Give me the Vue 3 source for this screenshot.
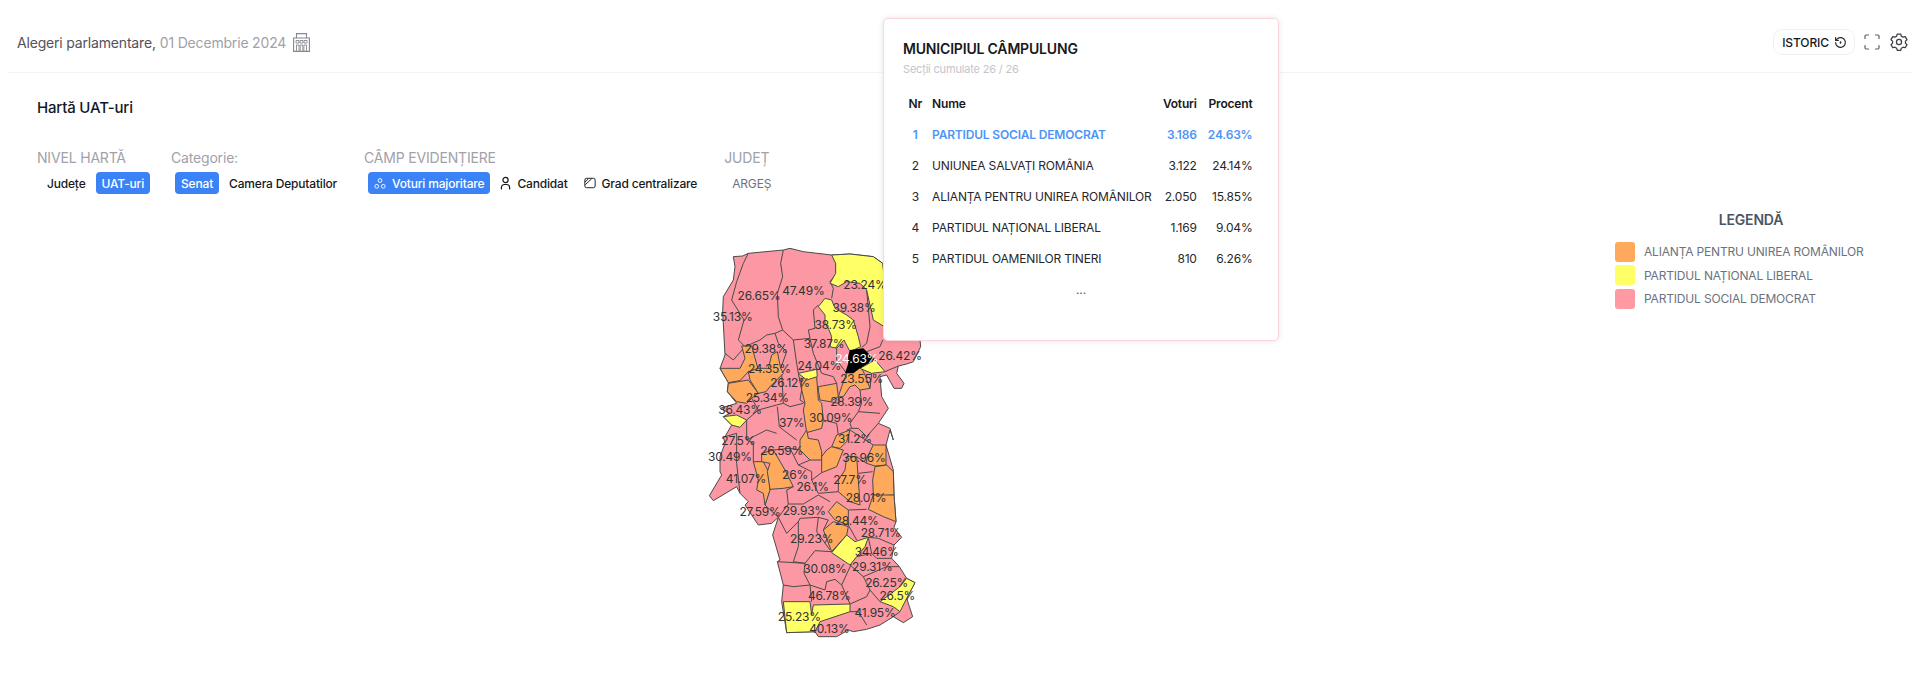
<script setup>
const rows = [
  { nr: 1, name: 'PARTIDUL SOCIAL DEMOCRAT', votes: '3.186', pct: '24.63%', lead: true },
  { nr: 2, name: 'UNIUNEA SALVAȚI ROMÂNIA', votes: '3.122', pct: '24.14%' },
  { nr: 3, name: 'ALIANȚA PENTRU UNIREA ROMÂNILOR', votes: '2.050', pct: '15.85%' },
  { nr: 4, name: 'PARTIDUL NAȚIONAL LIBERAL', votes: '1.169', pct: '9.04%' },
  { nr: 5, name: 'PARTIDUL OAMENILOR TINERI', votes: '810', pct: '6.26%' }
]
const legend = [
  { name: 'ALIANȚA PENTRU UNIREA ROMÂNILOR', color: '#ffa95c' },
  { name: 'PARTIDUL NAȚIONAL LIBERAL', color: '#ffff66' },
  { name: 'PARTIDUL SOCIAL DEMOCRAT', color: '#ff9aa2' }
]
const L = 570
const outline = '130,50 158,48 175,40 280,30 300,25 340,35 425,45 480,42 550,50 578,70 640,200 690,300 692,320 670,365 650,372 625,378 620,400 642,430 635,445 612,445 590,405 570,410 575,470 595,505 565,550 600,565 610,600 600,' + (L) + ' 588,' + (L + 45) + ' 610,' + (L + 120) + ' 612,' + (L + 195) + ' 618,' + (L + 275) + ' 612,' + (L + 292) + ' 635,' + (L + 322) + ' 612,' + (L + 345) + ' 605,' + (L + 385) + ' 628,' + (L + 410) + ' 650,' + (L + 445) + ' 675,' + (L + 458) + ' 650,' + (L + 505) + ' 668,' + (L + 560) + ' 640,' + (L + 578) + ' 610,' + (L + 560) + ' 570,' + (L + 585) + ' 530,' + (L + 598) + ' 490,' + (L + 605) + ' 475,' + (L + 600) + ' 440,' + (L + 620) + ' 385,' + (L + 620) + ' 375,' + (L + 605) + ' 290,' + (L + 608) + ' 275,' + (L + 515) + ' 280,' + (L + 465) + ' 262,' + (L + 395) + ' 270,' + (L + 390) + ' 248,' + (L + 315) + ' 265,' + (L + 262) + ' 245,' + (L + 280) + ' 205,' + (L + 285) + ' 165,' + (L + 225) + ' 175,' + (L + 215) + ' 150,' + (L + 190) + ' 140,' + (L + 170) + ' 70,' + (L + 212) + ' 58,' + (L + 197) + ' 95,' + (L + 135) + ' 90,' + (L + 125) + ' 90,' + (L + 80) + ' 105,' + (L + 40) + ' 100,' + (L + 20) + ' 105,590 125,555 100,530 120,520 90,505 140,490 112,455 115,428 90,385 105,345 98,215 100,170 130,120 135,80'
const shift = (pts) => pts.map(([x, y]) => x + ',' + (y + L)).join(' ')
const upperOrange = [
  '155,318 185,318 205,390 175,395 150,422 115,428 90,385 150,385 165,355',
  '115,430 175,420 205,460 185,475 170,490 140,485 112,455',
  '175,395 205,385 235,385 245,345 262,335 272,385 280,400 240,440 228,455 205,460 180,420',
  '335,415 380,412 385,480 395,490 400,540 395,565 350,578 340,510 345,490 335,450',
  '385,440 440,430 445,470 420,485 390,480 385,450',
  '470,400 485,380 515,385 525,405 540,445 510,450 495,435 480,440 460,470 445,470 455,440'
]
const lowerOrange = [
  [[350, 0], [355, 25], [385, 30], [395, 65], [395, 90], [360, 90], [330, 60], [330, 30]],
  [[440, 15], [480, 0], [470, 35], [450, 55], [425, 50]],
  [[425, 50], [460, 60], [440, 110], [395, 128], [395, 80], [410, 60]],
  [[470, 80], [500, 80], [505, 150], [510, 225], [480, 215], [445, 185], [445, 150], [465, 120]],
  [[550, 45], [588, 45], [588, 105], [555, 108], [530, 100], [530, 85]],
  [[555, 110], [590, 105], [610, 125], [612, 195], [580, 197], [550, 195], [548, 150]],
  [[550, 195], [612, 195], [618, 275], [580, 260], [535, 238]],
  [[190, 95], [220, 95], [235, 125], [240, 180], [225, 225], [220, 190], [200, 180], [205, 150]],
  [[215, 70], [250, 60], [285, 120], [310, 170], [280, 175], [240, 178], [232, 125], [240, 100], [215, 95]],
  [[440, 215], [475, 240], [475, 285], [435, 270], [415, 245]],
  [[430, 275], [475, 290], [470, 315], [425, 365], [400, 300]]
].map(shift)
const yellow = [
  '425,45 480,42 550,50 578,70 600,270 550,240 530,150 510,130 470,125 445,140 420,130 437,100 437,70',
  '405,175 385,200 405,225 405,250 415,265 425,290 420,320 440,325 462,300 480,335 512,320 505,290 490,240 470,225 435,205 425,180',
  '510,385 555,360 585,395 545,400',
  '325,400 380,388 382,410 350,420',
  '100,530 140,525 170,540 150,562 125,555',
  shift([[470, 315], [495, 335], [535, 322], [525, 350], [500, 380], [480, 405], [425, 368]]),
  shift([[650, 445], [675, 458], [650, 505], [630, 545], [610, 530], [570, 515], [630, 470]]),
  shift([[280, 515], [360, 515], [365, 555], [370, 525], [480, 522], [480, 545], [390, 575], [375, 605], [290, 608]])
]
const borders = [
  '175,40 160,70 140,125 125,180 162,240 145,300 165,320 130,360 105,340',
  '165,320 210,300 230,285 255,280 278,270 310,300 360,295 355,270 375,265 370,210 385,195',
  '280,30 272,70 278,110 262,160 265,230 278,270',
  '437,70 440,100 420,125 430,145 425,175',
  '255,280 265,310 290,335 272,385',
  '310,300 320,370 325,400 335,450 330,480 345,490',
  '360,295 370,340 395,400 430,410 440,430',
  '530,150 540,260 530,310 515,322',
  '578,300 570,320 530,335',
  '625,378 585,395',
  '545,400 540,445',
  '440,325 440,360 470,400',
  '275,400 280,490 300,500 340,490',
  '185,475 205,510 260,495 280,490',
  '205,510 170,540 170,600 230,' + (L + 0) + ' 260,' + (L + 10),
  '262,500 268,560 280,' + L + ' 320,' + (L + 30),
  '350,578 360,' + L,
  '400,540 440,550 445,' + (L + 15),
  '510,450 515,490 505,515 480,550 485,565 ',
  '505,515 570,520',
  '565,550 530,590 505,565 485,565 470,' + L,
  '445,470 445,490 420,485',
  '105,590 140,' + (L + 10) + ' 140,' + (L + 100) + ' 150,' + (L + 190),
  '170,600 190,' + (L + 40) + ' 190,' + (L + 95),
  shift([[250, 60], [300, 55], [330, 60]]),
  shift([[300, 55], [325, 105], [360, 90]]),
  shift([[325, 105], [365, 125], [365, 150], [395, 128]]),
  shift([[310, 170], [290, 180], [295, 222], [340, 222], [385, 195], [420, 215]]),
  shift([[365, 150], [385, 190], [445, 185]]),
  shift([[240, 178], [225, 225], [265, 262]]),
  shift([[295, 222], [265, 262], [290, 310], [325, 275], [330, 265], [385, 262], [415, 270], [400, 300]]),
  shift([[325, 275], [325, 350], [310, 395]]),
  shift([[385, 262], [380, 305], [420, 360]]),
  shift([[310, 395], [345, 400], [375, 362], [425, 365]]),
  shift([[262, 395], [345, 400], [342, 430], [360, 465], [310, 470], [280, 465]]),
  shift([[360, 465], [365, 515]]),
  shift([[360, 465], [405, 480], [410, 455], [435, 448], [455, 465], [485, 400]]),
  shift([[455, 465], [480, 522], [530, 500], [540, 480], [520, 440], [480, 405]]),
  shift([[540, 480], [570, 515]]),
  shift([[480, 545], [505, 545], [530, 585]]),
  shift([[475, 240], [530, 238]]),
  shift([[475, 285], [500, 330]]),
  shift([[535, 322], [545, 370], [500, 380]]),
  shift([[612, 345], [565, 325], [535, 322]]),
  shift([[545, 370], [560, 385], [605, 385]]),
  shift([[520, 440], [590, 410], [628, 410]]),
  shift([[500, 80], [530, 100]]),
  shift([[505, 130], [548, 125]]),
  shift([[480, 0], [550, 45]]),
  shift([[630, 545], [610, 560]])
]
const labels = [
  ['26.65%', 207, 165], ['47.49%', 340, 152], ['35.13%', 128, 230], ['23.24%', 525, 133],
  ['39.38%', 492, 202], ['38.73%', 437, 252], ['37.87%', 402, 310], ['29.38%', 228, 325],
  ['24.35%', 238, 385], ['24.04%', 388, 375], ['26.42%', 630, 345], ['23.55%', 515, 415],
  ['26.12%', 300, 428], ['25.34%', 232, 472], ['28.39%', 485, 484], ['36.43%', 150, 507],
  ['30.09%', 422, 533], ['37%', 305, 547],
  ['31.2%', 495, L + 25], ['27.5%', 145, L + 30], ['26.59%', 275, L + 60], ['30.49%', 120, L + 80],
  ['36.96%', 522, L + 82], ['26%', 315, L + 132], ['41.07%', 168, L + 145], ['27.7%', 480, L + 148],
  ['26.1%', 368, L + 170], ['28.01%', 528, L + 202], ['27.59%', 210, L + 243], ['29.93%', 343, L + 242],
  ['28.44%', 500, L + 270], ['28.71%', 572, L + 308], ['29.23%', 365, L + 325], ['34.46%', 560, L + 365],
  ['29.31%', 547, L + 410], ['30.08%', 405, L + 416], ['26.25%', 590, L + 457], ['26.5%', 622, L + 495],
  ['46.78%', 418, L + 495], ['41.95%', 555, L + 547], ['25.23%', 328, L + 558], ['40.13%', 418, L + 595]
]
</script>

<template>
  <div class="page">
    <header class="bar">
      <div class="crumb">
        <span>Alegeri parlamentare,</span>
        <span class="date">01 Decembrie 2024</span>
        <svg class="bldg" width="17" height="19" viewBox="0 0 17 19" fill="none" stroke="#85888f" stroke-width="1.1">
          <path d="M3.500 5V.6h10V5" />
          <path d="M.6 18.400V5h15.800v13.400zM0 18.400h17" />
          <path d="M3 7.500h3v2.500H3zM7 7.500h3v2.500H7zM11 7.500h3v2.500h-3z" stroke-width=".9" />
          <path d="M3.500 18v-6h2.600v6M7.200 18v-6h2.600v6M10.900 18v-6h2.600v6" stroke-width=".9" />
        </svg>
      </div>
      <div class="tools">
        <button class="hist">
          ISTORIC
          <svg width="13" height="13" viewBox="0 0 24 24" fill="none" stroke="#27272a" stroke-width="2.200" stroke-linecap="round" stroke-linejoin="round">
            <path d="M3 12a9 9 0 1 0 3-6.700L3 8" /><path d="M3 3v5h5" /><path d="M12 11v2" stroke-width="3" />
          </svg>
        </button>
        <svg class="ico" width="18" height="18" viewBox="0 0 18 18" fill="none" stroke="#5c5c66" stroke-width="1.200" stroke-linecap="round">
          <path d="M2 5.500V3.200Q2 2 3.200 2H5.500M12.500 2h2.300Q16 2 16 3.200V5.500M16 12.500v2.300q0 1.200-1.200 1.200H12.500M5.500 16H3.200Q2 16 2 14.800V12.500" />
        </svg>
        <svg class="ico" width="18" height="18" viewBox="0 0 24 24" fill="none" stroke="#3f3f46" stroke-width="1.700" stroke-linejoin="round">
          <path d="M9.600 2.500h4.800l.7 2.800 2.400 1.400 2.800-.8 2.400 4.200-2.100 2 0 2.800 2.100 2-2.400 4.200-2.800-.8-2.400 1.400-.7 2.800H9.600l-.7-2.800-2.400-1.400-2.800.8-2.400-4.200 2.100-2 0-2.800-2.100-2 2.400-4.200 2.800.8 2.400-1.400z" transform="translate(0 -1) scale(1 .98)" />
          <circle cx="12" cy="12" r="3.400" />
        </svg>
      </div>
    </header>

    <main class="body">
      <h1 class="title">Hartă UAT-uri</h1>
      <div class="filters">
        <div class="group">
          <div class="cap">NIVEL HARTĂ</div>
          <div class="tabs"><span class="tab">Județe</span><span class="tab on">UAT-uri</span></div>
        </div>
        <div class="group">
          <div class="cap">Categorie:</div>
          <div class="tabs"><span class="tab on">Senat</span><span class="tab">Camera Deputatilor</span></div>
        </div>
        <div class="group">
          <div class="cap">CÂMP EVIDENȚIERE</div>
          <div class="tabs">
            <span class="tab on">
              <svg width="12" height="13" viewBox="0 0 14 14" fill="none" stroke="#fff" stroke-width="1.100"><circle cx="7" cy="3.500" r="2.200" /><circle cx="3.200" cy="10.300" r="2.200" /><circle cx="10.800" cy="10.300" r="2.200" /></svg>
              Voturi majoritare
            </span>
            <span class="tab">
              <svg width="11" height="14" viewBox="0 0 11 14" fill="none" stroke="#18181b" stroke-width="1.200" stroke-linecap="round"><circle cx="5.500" cy="4" r="2.600" /><path d="M1.400 13v-1.500a3 3 0 0 1 3-3h2.200a3 3 0 0 1 3 3V13" /></svg>
              Candidat
            </span>
            <span class="tab">
              <svg width="12" height="14" viewBox="0 0 14 14" fill="none" stroke="#18181b" stroke-width="1.100"><rect x="1" y="1.500" width="12" height="11" rx="2" /><path d="M1.500 9L9 2M1 6L5 2.200" /></svg>
              Grad centralizare
            </span>
          </div>
        </div>
        <div class="group">
          <div class="cap">JUDEȚ</div>
          <div class="tabs"><span class="tab muted">ARGEȘ</span></div>
        </div>
      </div>

      <div class="stage">
        <svg class="map" width="260" height="410" viewBox="0 0 780 1230">
          <polygon :points="outline" fill="#fb98a3" stroke="#4a4a4a" stroke-width="3" stroke-linejoin="round" />
          <polyline v-for="(b, i) in borders" :key="'b' + i" :points="b" fill="none" stroke="#4a4a4a" stroke-width="3" />
          <polygon v-for="(p, i) in upperOrange.concat(lowerOrange)" :key="'o' + i" :points="p" fill="#ffa95c" stroke="#4a4a4a" stroke-width="3" stroke-linejoin="round" />
          <polygon v-for="(p, i) in yellow" :key="'y' + i" :points="p" fill="#ffff66" stroke="#4a4a4a" stroke-width="3" stroke-linejoin="round" />
          <polygon points="480,330 520,325 535,340 555,358 510,385 490,400 465,400 475,370 470,360" fill="#000" />
          <text v-for="l in labels" :key="l[0]" :x="l[1]" :y="l[2]" class="lbl">{{ l[0] }}</text>
          <text x="500" y="354" class="lbl white">24.63%</text>
        </svg>
        <aside class="legend">
          <div class="legend-title">LEGENDĂ</div>
          <div v-for="l in legend" :key="l.name" class="legend-row">
            <i class="swatch" :style="{ background: l.color }"></i>{{ l.name }}
          </div>
        </aside>
      </div>
    </main>

    <div class="tip">
      <div class="tip-title">MUNICIPIUL CÂMPULUNG</div>
      <div class="tip-sub">Secții cumulate 26 / 26</div>
      <table class="tbl">
        <thead>
          <tr><th class="c nr">Nr</th><th class="l">Nume</th><th class="r">Voturi</th><th class="r">Procent</th></tr>
        </thead>
        <tbody>
          <tr v-for="r in rows" :key="r.nr" :class="{ lead: r.lead }">
            <td class="c nr">{{ r.nr }}</td><td class="l">{{ r.name }}</td><td class="r">{{ r.votes }}</td><td class="r">{{ r.pct }}</td>
          </tr>
        </tbody>
      </table>
      <div class="more">...</div>
    </div>
  </div>
</template>

<style>
html, body { background: #fff; }
</style>

<style scoped>
.page { position: relative; width: 1916px; height: 700px; overflow: hidden; background: #fff; font-family: Inter, "Noto Sans", sans-serif; color: #18181b; letter-spacing: -.18px; }
.bar { display: flex; align-items: center; justify-content: space-between; height: 73px; margin: 0 4px 0 8px; padding: 12px 4px 0 9px; box-sizing: border-box; border-bottom: 1px solid #f3f4f6; }
.crumb { display: flex; align-items: center; gap: 4px; font-size: 14px; color: #52525b; }
.date { color: #a1a1aa; }
.bldg { margin-left: 3px; }
.tools { display: flex; align-items: center; gap: 9px; }
.hist { display: flex; align-items: center; gap: 5px; height: 26px; margin-right: -1px; padding: 0 7px 0 8px; background: #fff; border: 1px solid #f0f0f2; border-radius: 9px; font: 500 12px Inter, sans-serif; letter-spacing: -.1px; color: #18181b; }
.body { padding: 25px 29px 0 37px; }
.title { margin: 0; font-size: 15px; line-height: 20px; font-weight: 500; color: #111827; }
.filters { display: flex; gap: 21px; margin-top: 30px; }
.cap { font-size: 14px; line-height: 20px; color: #a1a1aa; }
.tabs { display: flex; gap: 4px; margin-top: 4px; padding-left: 4px; }
.tab { display: flex; align-items: center; gap: 6px; height: 22px; padding: 0 6px; border-radius: 4px; font-size: 12px; font-weight: 500; color: #18181b; white-space: nowrap; }
.tab.on { background: #3b82f6; color: #fff; }
.tab.muted { color: #71717a; font-weight: 400; margin-left: -2px; }
.stage { display: flex; justify-content: space-between; }
.map { margin: 46px 0 0 653px; overflow: visible; }
.lbl { font: 36px Inter, sans-serif; letter-spacing: -.6px; fill: #333; text-anchor: middle; dominant-baseline: central; }
.white { fill: #fff; }
.legend { width: 272px; margin: 16px 0 0 0; }
.legend-title { text-align: center; font-size: 14px; font-weight: 600; line-height: 20px; color: #4b5563; margin-bottom: 10px; }
.legend-row { display: flex; align-items: center; gap: 9px; height: 23.500px; font-size: 12px; color: #6b7280; white-space: nowrap; }
.swatch { width: 20px; height: 20px; border-radius: 3px; flex: none; }
.tip { position: absolute; left: 883px; top: 18px; width: 396px; height: 323px; box-sizing: border-box; padding: 20px 19px; background: #fff; border: 1px solid #fbd5da; border-radius: 5px; box-shadow: 0 0 6px rgba(0, 0, 0, .1); }
.tip-title { font-size: 14px; font-weight: 600; line-height: 20px; color: #18181b; }
.tip-sub { margin-top: 1px; font-size: 11px; line-height: 18px; color: #c4c4cc; }
.tbl { width: 355px; margin-top: 10px; border-collapse: collapse; font-size: 12px; }
.tbl th { font-weight: 600; height: 31px; padding: 0 5.500px; }
.tbl td { height: 31px; padding: 0 5.500px; white-space: nowrap; color: #27272a; }
.tbl .nr { padding-right: 4.500px; }
.c { text-align: center; }
.l { text-align: left; }
.r { text-align: right; }
.tbl .lead td { color: #4f94f5; font-weight: 600; }
.more { margin-top: 6px; text-align: center; font-size: 12px; line-height: 20px; color: #52525b; }
</style>
